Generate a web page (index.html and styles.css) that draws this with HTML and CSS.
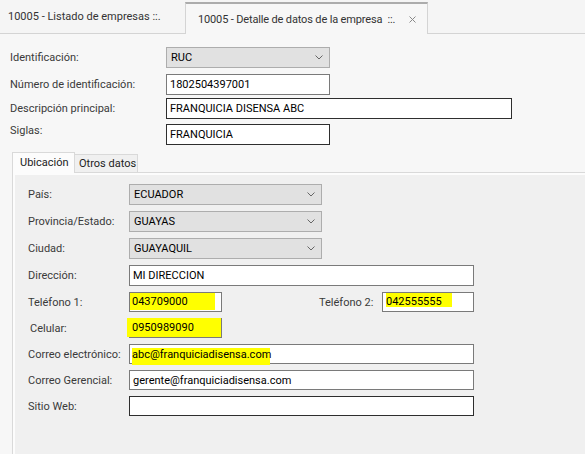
FILE: index.html
```html
<!DOCTYPE html>
<html lang="es">
<head>
<meta charset="utf-8">
<title>10005 - Detalle de datos de la empresa</title>
<link rel="stylesheet" href="styles.css">
</head>
<body>
<div class="tabstrip">
  <div class="doctab">10005 - Listado de empresas ::.</div>
  <div class="doctab active">
    <span class="doctab-title">10005 - Detalle de datos de la empresa&nbsp; ::.</span>
    <svg class="close" width="7" height="7" viewBox="0 0 7 7"><path d="M0.5 0.5L6.5 6.5M6.5 0.5L0.5 6.5" stroke="#8a8a8a" stroke-width="1" fill="none"/></svg>
  </div>
</div>

<div class="main">
  <div class="frow r1">
    <label class="flabel">Identificación:</label>
    <div class="combo w-164">RUC<svg class="chev" width="8" height="5" viewBox="0 0 8 5"><polyline points="0.5,0.5 4,4 7.5,0.5" stroke="#666" stroke-width="1" fill="none"/></svg></div>
  </div>
  <div class="frow r2">
    <label class="flabel">Número de identificación:</label>
    <div class="field w-164">1802504397001</div>
  </div>
  <div class="frow r3">
    <label class="flabel">Descripción principal:</label>
    <div class="field dark w-346">FRANQUICIA DISENSA ABC</div>
  </div>
  <div class="frow r4">
    <label class="flabel top">Siglas:</label>
    <div class="field dark w-164">FRANQUICIA</div>
  </div>

  <div class="subtabs">
    <div class="stab sel">Ubicación</div>
    <div class="stab">Otros datos</div>
  </div>
  <div class="panel">
    <div class="panel-in">
      <div class="prow">
        <label class="plabel">País:</label>
        <div class="combo w-193">ECUADOR<svg class="chev" width="8" height="5" viewBox="0 0 8 5"><polyline points="0.5,0.5 4,4 7.5,0.5" stroke="#666" stroke-width="1" fill="none"/></svg></div>
      </div>
      <div class="prow">
        <label class="plabel">Provincia/Estado:</label>
        <div class="combo w-193">GUAYAS<svg class="chev" width="8" height="5" viewBox="0 0 8 5"><polyline points="0.5,0.5 4,4 7.5,0.5" stroke="#666" stroke-width="1" fill="none"/></svg></div>
      </div>
      <div class="prow">
        <label class="plabel">Ciudad:</label>
        <div class="combo w-193">GUAYAQUIL<svg class="chev" width="8" height="5" viewBox="0 0 8 5"><polyline points="0.5,0.5 4,4 7.5,0.5" stroke="#666" stroke-width="1" fill="none"/></svg></div>
      </div>
      <div class="prow">
        <label class="plabel">Dirección:</label>
        <div class="field tall w-345">MI DIRECCION</div>
      </div>
      <div class="prow">
        <label class="plabel">Teléfono 1:</label>
        <div class="field bare w-93"><span class="hl hl-tel1">043709000</span></div>
        <label class="plabel2">Teléfono 2:</label>
        <div class="field bare w-92"><span class="hl hl-tel2">042555555</span></div>
      </div>
      <div class="prow">
        <label class="plabel indent">Celular:</label>
        <div class="field bare w-93"><span class="hl hl-cel">0950989090</span></div>
      </div>
      <div class="prow">
        <label class="plabel">Correo electrónico:</label>
        <div class="field bare w-345"><span class="hl hl-mail">abc@franquiciadisensa.com</span></div>
      </div>
      <div class="prow">
        <label class="plabel">Correo Gerencial:</label>
        <div class="field w-345">gerente@franquiciadisensa.com</div>
      </div>
      <div class="prow">
        <label class="plabel">Sitio Web:</label>
        <div class="field dark w-345"></div>
      </div>
    </div>
  </div>
</div>
</body>
</html>
```

FILE: styles.css
```css
* {
  box-sizing: border-box;
}

html, body {
  margin: 0;
  padding: 0;
}

body {
  width: 585px;
  height: 454px;
  overflow: hidden;
  background: #f7f7f7;
  font-family: Roboto, "Liberation Sans", sans-serif;
  font-size: 11px;
  color: #3a3a3a;
}

/* document tabs */
.tabstrip {
  display: flex;
  align-items: flex-end;
  height: 34px;
  border-bottom: 1px solid #d4d4d4;
  background: #f5f5f5;
}

.doctab {
  display: flex;
  align-items: center;
  width: 185px;
  height: 33px;
  padding-left: 8px;
  color: #333;
  white-space: nowrap;
}

.doctab.active {
  width: 243px;
  height: 32px;
  margin-bottom: -1px;
  padding: 0 11px 0 12px;
  background: #f7f7f7;
  border: 1px solid #d4d4d4;
  border-top: 2px solid #acacac;
  border-bottom: none;
}

.doctab-title {
  flex: 0 1 auto;
  min-width: 0;
  overflow: hidden;
  letter-spacing: -0.15px;
}

.close {
  display: block;
  flex: none;
  margin-left: auto;
}

/* main form */
.main {
  padding: 13px 0 0 10px;
}

.frow {
  display: flex;
  align-items: center;
  height: 21px;
}

.r2 { margin-top: 6px; }
.r3 { margin-top: 3px; }
.r4 { margin-top: 5px; }

.flabel {
  width: 156px;
  line-height: 13px;
}

.flabel.top {
  align-self: flex-start;
}

.combo {
  display: flex;
  align-items: center;
  justify-content: space-between;
  height: 21px;
  padding: 0 6px 0 4px;
  background: #e1e1e1;
  border: 1px solid #adadad;
  color: #000;
}

.chev {
  display: block;
}

.field {
  display: flex;
  align-items: center;
  height: 20px;
  padding-left: 3px;
  background: #fff;
  border: 1px solid #7a7a7a;
  color: #000;
  white-space: nowrap;
}

.frow .field {
  height: 21px;
}

.field.dark {
  border-color: #2e2e2e;
}

.field.tall {
  height: 21px;
}

.field.bare {
  padding-left: 0;
}

.w-164 { width: 164px; }
.w-346 { width: 346px; }
.w-193 { width: 193px; }
.w-345 { width: 345px; }
.w-93 { width: 93px; }
.w-92 { width: 92px; }

/* sub tabs */
.subtabs {
  display: flex;
  align-items: flex-end;
  height: 20px;
  margin-top: 7px;
  padding-left: 2px;
}

.stab {
  display: flex;
  align-items: center;
  height: 18px;
  width: 63px;
  padding-left: 4px;
  background: #f0f0f0;
  border: 1px solid #d9d9d9;
  border-left: none;
  border-bottom: none;
  color: #222;
}

.stab.sel {
  height: 21px;
  margin-bottom: -1px;
  padding: 0 0 2px 7px;
  background: #fcfcfc;
  border-left: 1px solid #d9d9d9;
  position: relative;
  z-index: 1;
}

.panel {
  width: 600px;
  height: 300px;
  margin-left: 2px;
  padding: 2px;
  background: #fcfcfc;
  border: 1px solid #d9d9d9;
}

.panel-in {
  display: flex;
  flex-direction: column;
  gap: 6px;
  height: 100%;
  padding: 9px 0 0 13px;
  background: #f0f0f0;
}

.prow {
  display: flex;
  align-items: center;
}

.plabel {
  width: 101px;
  line-height: 13px;
}

.plabel.indent {
  padding-left: 2px;
}

.plabel2 {
  width: 63px;
  margin-left: 97px;
  line-height: 13px;
}

/* highlighter marks */
.hl {
  display: block;
  align-self: flex-start;
  background: #ffff00;
  color: #000;
  white-space: nowrap;
}

.hl-tel1 {
  width: 85px;
  height: 17px;
  line-height: 17px;
  padding-left: 2px;
}

.hl-tel2 {
  width: 66px;
  height: 14px;
  line-height: 17px;
  margin-left: 3px;
}

.hl-cel {
  width: 94px;
  height: 19px;
  line-height: 19px;
  margin: -1px 0 0 -3px;
  padding-left: 5px;
}

.hl-mail {
  width: 138px;
  height: 17px;
  line-height: 13px;
  margin: 3px 0 0 2px;
}
```
